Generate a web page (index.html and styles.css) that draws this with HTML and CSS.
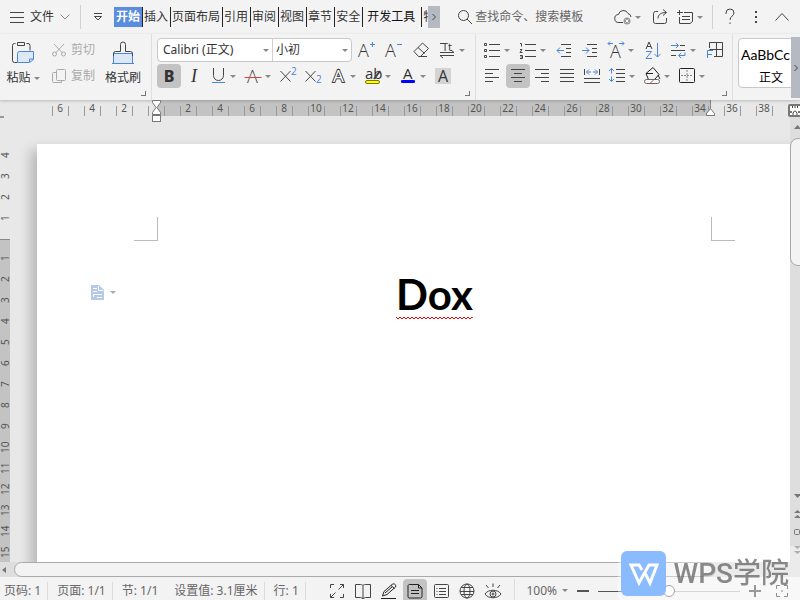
FILE: index.html
```html
<!DOCTYPE html>
<html lang="zh-CN">
  <head>
    <meta charset="UTF-8" />
    <meta name="viewport" content="width=device-width, initial-scale=1.0" />
    <title>Dox</title>
    <link rel="stylesheet" href="styles.css">
  </head>
  <body>
    <!-- Menu bar -->
    <header class="menubar">
      <button class="file-btn">
        <svg width="14" height="12" viewBox="0 0 14 12"><path d="M0 1.5h14M0 6.5h14M0 11.5h14" /></svg>
        文件
        <svg width="10" height="8" viewBox="0 0 10 8" class="soft"><path d="M.5 1.5L5 6l4.500-4.500" /></svg>
      </button>
      <span class="sep"></span>
      <button class="quick-btn" aria-label="自定义">
        <svg width="8" height="8" viewBox="0 0 8 8"><path d="M0 .5h8M.5 3.500L4 7l3.500-3.500z" /></svg>
      </button>
      <nav class="tabs">
        <button class="tab active">开始</button>
        <button class="tab">插入</button>
        <button class="tab">页面布局</button>
        <button class="tab">引用</button>
        <button class="tab">审阅</button>
        <button class="tab">视图</button>
        <button class="tab">章节</button>
        <button class="tab">安全</button>
        <button class="tab dev">开发工具</button>
        <button class="tab cut">特</button>
      </nav>
      <button class="tab-scroll" aria-label="更多选项卡">
        <svg width="4" height="8" viewBox="0 0 4 8"><path d="M.5 1L3.500 4L.5 7" /></svg>
      </button>
      <label class="search">
        <svg width="14" height="14" viewBox="0 0 14 14"><circle cx="5.500" cy="5.500" r="5" /><path d="M9 9l5 5" /></svg>
        <input type="text" placeholder="查找命令、搜索模板">
      </label>
      <div class="window-tools">
        <button class="drop" aria-label="云同步">
          <svg class="icon" viewBox="0 0 20 20"><path d="M10 15.500H6a4 4 0 0 1-.5-8A5 5 0 0 1 15 6.500a4 4 0 0 1 3 3.500" /><circle cx="14" cy="14" r="3.500" class="grey" /><path d="M12.500 12.500l3 3m0-3l-3 3" class="white" /></svg>
        </button>
        <button class="tool" aria-label="分享">
          <svg class="icon" viewBox="0 0 20 20"><path d="M8 4.500H5.500a2 2 0 0 0-2 2v8a2 2 0 0 0 2 2h9a2 2 0 0 0 2-2V11M8 11.500c0-4 3-6 8-6M13 2.500l3.500 3-3.500 3" /></svg>
        </button>
        <button class="drop" aria-label="批注">
          <svg class="icon" viewBox="0 0 20 20"><path d="M2 5.500h6M4.500 3v5M9 5.500h8.500v9l-2.500 2H4.500V10M7 9.500h8M7 12.500h8" /></svg>
        </button>
        <span class="sep"></span>
        <button class="tool" aria-label="帮助">
          <svg class="icon" viewBox="0 0 20 20"><path d="M6 7V6a4 4 0 0 1 8 0c0 3-4 3-4 7M10 15.500v1.500" /></svg>
        </button>
        <button class="tool" aria-label="更多">
          <svg class="icon" viewBox="0 0 20 20"><path d="M10 4v2M10 9v2M10 14v2" stroke-width="2" /></svg>
        </button>
        <button class="tool" aria-label="收起功能区">
          <svg class="icon" viewBox="0 0 20 20"><path d="M3.500 13.500l6.500-7 6.500 7" /></svg>
        </button>
      </div>
    </header>

    <!-- Ribbon -->
    <section class="ribbon">
      <div class="group">
        <div class="clipboard">
          <button class="big-btn">
            <svg width="28" height="26" viewBox="0 0 28 26"><path d="M6.500 4.500h-1a2 2 0 0 0-2 2v15a2 2 0 0 0 2 2h3M17.500 4.500h1.500a2 2 0 0 1 2 2v5M8.500 3.500h7v3h-7z" /><path d="M8.500 14.500a2 2 0 0 1 2-2h14v8l-4 3h-12z" class="paste" /><path d="M20.500 23v-3h4" class="blue" /></svg>
            <span class="with-caret">粘贴</span>
          </button>
          <div class="small-btns">
            <button class="small-btn" disabled>
              <svg width="16" height="16" viewBox="0 0 16 16"><path d="M3 2l8.500 9M13 2L4.500 11" /><circle cx="3.500" cy="12" r="2" /><circle cx="12.500" cy="12" r="2" /></svg>
              剪切
            </button>
            <button class="small-btn" disabled>
              <svg width="16" height="16" viewBox="0 0 16 16"><rect x="5.500" y="1.500" width="9" height="11" rx="1" /><path d="M5.500 4.500h-3a1 1 0 0 0-1 1v8a1 1 0 0 0 1 1h8v-2" /></svg>
              复制
            </button>
          </div>
          <button class="big-btn">
            <svg width="28" height="26" viewBox="0 0 28 26"><path d="M4.500 14.500h19v10h-19z" class="paste" /><path d="M4.500 17v-2.500a2 2 0 0 1 2-2h5v-7a2 2 0 0 1 5 0v7h5a2 2 0 0 1 2 2V17" /><path d="M3 24.500h22" class="blue" /></svg>
            格式刷
          </button>
        </div>
        <button class="launcher" aria-label="剪贴板"></button>
      </div>

      <div class="group">
        <div class="row font-row">
          <div class="combos">
            <label class="combo family">
              <select aria-label="字体"><option>Calibri (正文)</option></select>
            </label>
            <label class="combo size">
              <select aria-label="字号"><option>小初</option></select>
            </label>
          </div>
          <button class="tool" aria-label="增大字号">
            <svg class="icon" viewBox="0 0 20 20"><text x="1" y="17" class="thin">A</text><path d="M13 4.500h5M15.500 2v5" class="blue" /></svg>
          </button>
          <button class="tool" aria-label="减小字号">
            <svg class="icon" viewBox="0 0 20 20"><text x="1" y="17" class="thin">A</text><path d="M13 4.500h5" class="blue" /></svg>
          </button>
          <button class="tool" aria-label="清除格式">
            <svg class="icon" viewBox="0 0 20 20"><path d="M3 11.500l8.500-8.500 6 5.500-8 8H7.500zM7 7.500l6.500 6M9 16.500h7" /></svg>
          </button>
          <button class="drop" aria-label="更改大小写">
            <svg class="icon" viewBox="0 0 20 20"><text x="5" y="11" class="tiny">Tt</text><path d="M3 3.500h4M3 12.500h14M3 15.500h14M14 10l3 2.500M6 18l-3-2.500" /></svg>
          </button>
        </div>
        <div class="row">
          <button class="tool active bold" aria-label="加粗">B</button>
          <button class="tool italic" aria-label="倾斜">I</button>
          <button class="drop" aria-label="下划线">
            <svg class="icon" viewBox="0 0 20 20"><path d="M5.500 2v7.500a4.500 4.500 0 0 0 10 0V2" /><path d="M4 16.500h13" class="blue" /></svg>
          </button>
          <button class="drop" aria-label="删除线">
            <svg class="icon" viewBox="0 0 20 20"><text x="4" y="17" class="thin">A</text><path d="M1.500 11.500h17" class="red" /></svg>
          </button>
          <button class="tool" aria-label="上标">
            <svg class="icon" viewBox="0 0 20 20"><path d="M1.500 5l10 10.500M11.500 5l-10 10.500" /><text x="12" y="9" class="script">2</text></svg>
          </button>
          <button class="tool" aria-label="下标">
            <svg class="icon" viewBox="0 0 20 20"><path d="M1.500 5l10 10.500M11.500 5l-10 10.500" /><text x="12" y="17" class="script">2</text></svg>
          </button>
          <button class="drop" aria-label="文字效果">
            <svg class="icon" viewBox="0 0 20 20"><text x="5" y="16" class="outline">A</text></svg>
          </button>
          <button class="drop" aria-label="突出显示">
            <svg class="icon" viewBox="0 0 20 20"><text x="2" y="13" class="ab">ab</text><path d="M17 5l-6 8" stroke-width="2" /><rect x="2.500" y="14.500" width="14" height="3" rx="1.500" fill="#ffff00" stroke="#777700" /></svg>
          </button>
          <button class="drop" aria-label="字体颜色">
            <svg class="icon" viewBox="0 0 20 20"><text x="5" y="13" class="ab">A</text><rect x="3" y="14" width="14" height="3" rx="1" fill="#0000ff" stroke="none" /></svg>
          </button>
          <button class="tool" aria-label="字符底纹">
            <svg class="icon" viewBox="0 0 20 20"><rect x="1" y="2" width="16" height="16" fill="#d4d4d4" stroke="none" /><text x="4" y="16" class="mid">A</text></svg>
          </button>
        </div>
        <button class="launcher" aria-label="字体设置"></button>
      </div>

      <div class="group">
        <div class="row para-row">
          <button class="drop" aria-label="项目符号">
            <svg class="icon" viewBox="0 0 20 20"><path d="M7 4.500h11M7 10.500h11M7 16.500h11" /><path d="M2.500 3.500h2v2h-2zM2.500 9.500h2v2h-2zM2.500 15.500h2v2h-2z" /></svg>
          </button>
          <button class="drop" aria-label="编号">
            <svg class="icon" viewBox="0 0 20 20"><path d="M7 4.500h11M7 10.500h11M7 16.500h11" /><path d="M2 3.500h1.500v3M2 9.500h2l-2 3h2.500M2 15.500h2.500v3H2M2.500 17h2" /></svg>
          </button>
          <button class="tool" aria-label="减少缩进">
            <svg class="icon" viewBox="0 0 20 20"><path d="M6 4.500h10M11 8.500h5M11 12.500h5M6 16.500h10" /><path d="M9 10.500H2M5 7.500l-3 3 3 3" class="blue" /></svg>
          </button>
          <button class="tool" aria-label="增加缩进">
            <svg class="icon" viewBox="0 0 20 20"><path d="M6 4.500h10M11 8.500h5M11 12.500h5M6 16.500h10" /><path d="M1 10.500h7M5 7.500l3 3-3 3" class="blue" /></svg>
          </button>
          <button class="drop" aria-label="中文版式">
            <svg class="icon" viewBox="0 0 20 20"><text x="4" y="18" class="thin">A</text><path d="M7 3.500H2M4 1.500l-2 2 2 2M13 3.500h5M16 1.500l2 2-2 2" class="blue" /></svg>
          </button>
          <button class="tool" aria-label="排序">
            <svg class="icon" viewBox="0 0 20 20"><path d="M3 9l3-7 3 7M4 6.500h4" /><path d="M3 11.500h5.500l-5.500 7h6M14.500 3v14M11.500 14l3 3 3-3" class="blue" /></svg>
          </button>
          <button class="drop" aria-label="制表位">
            <svg class="icon" viewBox="0 0 20 20"><path d="M12 5.500h5M3 10.500h14M3 15.500h5" /><path d="M3 5.500h7M8 3l2.500 2.500L8 8M17 12.500v3h-6M13 13l-2.500 2.500L13 18" class="blue" /></svg>
          </button>
          <button class="tool" aria-label="表格线">
            <svg class="icon" viewBox="0 0 20 20"><path d="M4.500 8V2.500h13v14H9M11.500 2.500v14M4.500 9.500h13" /><path d="M2.500 18v-7.500H8M2.500 14.500H7" class="blue" /></svg>
          </button>
        </div>
        <div class="row">
          <button class="tool" aria-label="左对齐">
            <svg class="icon" viewBox="0 0 20 20"><path d="M2 3.500h14M2 7.500h8M2 11.500h14M2 15.500h8" /></svg>
          </button>
          <button class="tool active" aria-label="居中对齐">
            <svg class="icon" viewBox="0 0 20 20"><path d="M3 3.500h14M6 7.500h8M3 11.500h14M6 15.500h8" /></svg>
          </button>
          <button class="tool" aria-label="右对齐">
            <svg class="icon" viewBox="0 0 20 20"><path d="M2 3.500h14M8 7.500h8M2 11.500h14M8 15.500h8" /></svg>
          </button>
          <button class="tool" aria-label="两端对齐">
            <svg class="icon" viewBox="0 0 20 20"><path d="M2 3.500h14M2 7.500h14M2 11.500h14M2 15.500h14" /></svg>
          </button>
          <button class="tool" aria-label="分散对齐">
            <svg class="icon" viewBox="0 0 20 20"><path d="M1.500 3v6M16.500 3v6M1 12.500h16M1 16.500h16" /><path d="M3.500 6h4.500M10 6h4.500M6 3.500L3.500 6 6 8.500M12 3.500L14.500 6 12 8.500" class="blue" /></svg>
          </button>
          <button class="drop" aria-label="行距">
            <svg class="icon" viewBox="0 0 20 20"><path d="M9 3.500h9M9 7.500h9M9 11.500h9M9 15.500h9" /><path d="M4.500 2.500v5M4.500 10.500v5M2 5l2.500-2.500L7 5M2 13l2.500 2.500L7 13" class="blue" /></svg>
          </button>
          <button class="drop" aria-label="底纹颜色">
            <svg class="icon" viewBox="0 0 20 20"><path d="M4 7.500l7-6 6 7-4.500 5H6.500zM4 7.500h7M16 9l2 4" stroke="#222" /><rect x="2.500" y="13.500" width="15" height="4" rx="2" fill="#fff" stroke="#666" /><path d="M8 17.500l4-4" class="red" /></svg>
          </button>
          <button class="drop" aria-label="边框">
            <svg class="icon" viewBox="0 0 20 20"><rect x="2.500" y="2.500" width="15" height="14" rx="1" stroke="#222" /><path d="M10 4v12M4 9.500h12" stroke-dasharray="2 1" class="soft" /></svg>
          </button>
        </div>
        <button class="launcher" aria-label="段落设置"></button>
      </div>

      <div class="gallery">
        <button class="style-card"><span class="sample">AaBbCc</span><span>正文</span></button>
      </div>
      <button class="ribbon-scroll" aria-label="向右滚动">
        <svg width="4" height="8" viewBox="0 0 4 8"><path d="M.5 1L3.500 4L.5 7" /></svg>
      </button>
    </section>

    <!-- Horizontal ruler -->
    <div class="ruler">
      <div class="ruler-body"></div>
      <div class="ruler-marks">
        <span>6</span><span>4</span><span>2</span><span></span>
        <span>2</span><span>4</span><span>6</span><span>8</span>
        <span>10</span><span>12</span><span>14</span><span>16</span>
        <span>18</span><span>20</span><span>22</span><span>24</span>
        <span>26</span><span>28</span><span>30</span><span>32</span>
        <span>34</span><span>36</span><span>38</span><span></span>
      </div>
      <svg class="indent-left" width="11" height="22" viewBox="0 0 11 22"><path d="M1.500.5h8v2L6 7.500l3.500 5v2h-8v-2L5 7.500l-3.500-5z" /><rect x="1.500" y="15.500" width="8" height="6" /></svg>
      <svg class="indent-right" width="11" height="8" viewBox="0 0 11 8"><path d="M1.500 7.500v-2L5.500.5l4 5v2z" /></svg>
      <button class="ruler-toggle" aria-label="标尺">
        <svg width="10" height="9" viewBox="0 0 10 9"><path d="M0 0h10v5H8v2h2v2H0V7h2V5H0z" fill="#fff" stroke="none" /><path d="M2.500 0v2M5 0v2M7.500 0v2M3 9V7l1.500-2h1L7 7v2" /></svg>
      </button>
    </div>

    <main class="workspace">
      <div class="vruler">
        <div class="vruler-margin"><span>4</span><span>3</span><span>2</span><span>1</span></div>
        <div class="vruler-body">
          <span>1</span><span>2</span><span>3</span><span>4</span><span>5</span>
          <span>6</span><span>7</span><span>8</span><span>9</span><span>10</span>
          <span>11</span><span>12</span><span>13</span><span>14</span><span>15</span>
        </div>
      </div>

      <div class="canvas">
        <article class="page">
          <span class="crop crop-left"></span>
          <span></span>
          <span class="crop crop-right"></span>
          <button class="para-handle" aria-label="段落布局">
            <svg width="13" height="15" viewBox="0 0 13 15"><path d="M0 0h8l5 5v10H0z" fill="#b4cae8" stroke="none" /><path d="M7.500 1v4.500H12M2 3.500h4M2 6.500h4M2 9.500h9M2.500 12v-2.500M6 12.500h5" class="white" /></svg>
          </button>
          <h1 contenteditable="true" spellcheck="false">Dox<svg class="squiggle" height="4"><defs><pattern id="wave" width="4" height="4" patternUnits="userSpaceOnUse"><path d="M-1 0l3 3 3-3" /></pattern></defs><rect width="100%" height="4" fill="url(#wave)" stroke="none" /></svg></h1>
        </article>
      </div>

      <div class="vscroll">
        <button class="v-up" aria-label="向上滚动"><svg width="7" height="4" viewBox="0 0 7 4"><path d="M0 4l3.500-4L7 4z" /></svg></button>
        <div class="vthumb"></div>
        <div class="v-buttons">
          <button aria-label="向下滚动"><svg width="7" height="8" viewBox="0 0 7 8"><path d="M0 2h7L3.500 6z" /></svg></button>
          <button aria-label="上一页"><svg width="7" height="8" viewBox="0 0 7 8"><path d="M0 3l3.500-3L7 3zM0 8l3.500-3L7 8z" /></svg></button>
          <button aria-label="选择浏览对象"><svg width="7" height="8" viewBox="0 0 7 8"><rect x=".5" y="1.500" width="5" height="5" rx="1" class="box" /></svg></button>
          <button aria-label="下一页"><svg width="7" height="8" viewBox="0 0 7 8"><path d="M0 0h7L3.500 3zM0 5h7L3.500 8z" /></svg></button>
        </div>
      </div>
    </main>

    <div class="hscroll">
      <button aria-label="向左滚动"><svg width="4" height="6" viewBox="0 0 4 6"><path d="M4 0v6L0 3z" /></svg></button>
      <div class="hthumb"></div>
    </div>

    <!-- Status bar -->
    <footer class="statusbar">
      <span class="stat">页码: 1</span>
      <span class="stat">页面: 1/1</span>
      <span class="stat">节: 1/1<span>设置值: 3.1厘米</span></span>
      <span class="stat">行: 1</span>
      <div class="views">
        <button class="tool" aria-label="全屏显示"><svg class="icon" viewBox="0 0 20 20"><path d="M3.500 7V3.500H7M13 3.500h3.500V7M16.500 13v3.500H13M7 16.500H3.500V13M11.500 8.500l5-5M8.500 11.500l-5 5" /></svg></button>
        <button class="tool" aria-label="阅读版式"><svg class="icon" viewBox="0 0 20 20"><path d="M10 4.500v13M10 4.500c-1-1-2-1-3-1H2.500v13h5l2.500 1 2.500-1h5v-13H13c-1 0-2 0-3 1" /></svg></button>
        <button class="tool" aria-label="写作模式"><svg class="icon" viewBox="0 0 20 20"><path d="M3.500 15l1.500-4.500L13 3.500c2-1.500 4.500 0 3.500 2.500L8 13.500zM12 4.500l3.500 3M6 12l7-6M2 17.500h15" stroke="#222" /></svg></button>
        <button class="tool active" aria-label="页面视图"><svg class="icon" viewBox="0 0 20 20"><path d="M5 3.500h8.500l3.500 3.500v8.500a1.500 1.500 0 0 1-1.500 1.500h-11A1.500 1.500 0 0 1 3 15.500V5a1.500 1.500 0 0 1 2-1.500zM13.500 3.500V7H17M6 9.500h8M6 12.500h8" stroke="#222" /></svg></button>
        <button class="tool" aria-label="大纲"><svg class="icon" viewBox="0 0 20 20"><rect x="3.500" y="3.500" width="14" height="13" rx="1" /><path d="M8 7.500h7M8 10.500h7M8 13.500h7M5.500 7.500h1M5.500 10.500h1M5.500 13.500h1" /></svg></button>
        <button class="tool" aria-label="Web 版式"><svg class="icon" viewBox="0 0 20 20"><circle cx="10" cy="10" r="7" /><ellipse cx="10" cy="10" rx="3" ry="7" /><path d="M4 6.500h12M3 10.500h14M4 13.500h12" /></svg></button>
        <button class="tool" aria-label="护眼模式"><svg class="icon" viewBox="0 0 20 20"><path d="M2 13c3-5 13-5 16 0-3 5-13 5-16 0zM10 6V2.500M5.500 7L3 4M14.500 7L17 4" /><circle cx="10" cy="13" r="3" /><circle cx="10" cy="13" r="1" /></svg></button>
      </div>
      <div class="zoom">
        <button class="zoom-value with-caret">100%</button>
        <button class="zoom-step" aria-label="缩小"><svg width="12" height="12" viewBox="0 0 12 12"><path d="M0 6h12" /></svg></button>
        <input type="range" min="0" max="100" value="50" aria-label="显示比例">
        <button class="zoom-step" aria-label="放大"><svg width="12" height="12" viewBox="0 0 12 12"><path d="M0 6h12M6 0v12" /></svg></button>
        <button class="tool" aria-label="最佳显示比例"><svg class="icon" viewBox="0 0 20 20"><path d="M4.500 8V4.500H8M12 4.500h3.500V8M15.500 12v3.500H12M8 15.500H4.500V12M10 9v2" /></svg></button>
      </div>
    </footer>

    <div class="brand">
      <svg width="46" height="46" viewBox="0 0 46 46"><rect width="45" height="45" y="1" rx="6" fill="#8abbff" stroke="none" /><path d="M21 20l-3-5h-8l8 18 10-18h8L29 33l-5-10" stroke="#fff" stroke-width="3" /></svg>
      WPS学院
    </div>
  </body>
</html>
```

FILE: styles.css
```css
* {
  margin: 0;
  padding: 0;
  box-sizing: border-box;
}

body {
  height: 100vh;
  display: flex;
  flex-direction: column;
  overflow: hidden;
  background: #f3f3f3;
  color: #333;
  font-family: "Noto Sans", "Noto Sans CJK SC", sans-serif;
  font-size: 12px;
  line-height: 18px;
}

button,
input,
select {
  font: inherit;
  color: inherit;
  background: none;
  border: none;
  outline: none;
}

button {
  display: flex;
  align-items: center;
  justify-content: center;
  flex-shrink: 0;
  white-space: nowrap;
}

svg {
  flex-shrink: 0;
  fill: none;
  stroke: #444;
}

.icon {
  width: 20px;
  height: 20px;
  overflow: visible;
}

svg text {
  fill: #333;
  stroke: none;
  font-family: "Open Sans", sans-serif;
}

svg .blue { stroke: #4a86dc; }
svg .red { stroke: #e23b3b; }
svg .white { stroke: #fff; }
svg .grey { fill: #999; stroke: none; }
svg .paste { fill: #dce8f5; stroke: #4a86dc; }
.soft { stroke: #888; }

svg .thin { font-size: 18px; font-weight: 300; }
svg .mid { font-size: 16px; }
svg .ab { font-size: 15px; }
svg .tiny { font-size: 11px; }
svg .script { font-size: 10px; fill: #4a86dc; }

/* hollow letter: dark rim painted behind a white face */
svg .outline {
  font-size: 17px;
  fill: #fff;
  stroke: #444;
  stroke-width: 2px;
  paint-order: stroke;
}

.sep {
  width: 1px;
  height: 24px;
  background: #d0d0d0;
}

/* buttons shared by all bars */
.tool {
  width: 24px;
  height: 24px;
  border-radius: 4px;
}

.tool.active {
  background: #c3c3c3;
}

.drop {
  width: 34px;
  height: 24px;
  justify-content: flex-start;
  gap: 2px;
  padding-left: 1px;
}

.drop::after,
.with-caret::after,
.combo::after {
  content: "";
  flex-shrink: 0;
  border: 3px solid transparent;
  border-top-color: #888;
  border-bottom: none;
}

.with-caret {
  display: flex;
  align-items: center;
  gap: 3px;
}

/* menu bar */
.menubar {
  display: flex;
  align-items: center;
  flex-shrink: 0;
  height: 34px;
  padding-right: 6px;
}

.file-btn {
  gap: 6px;
  padding: 0 10px;
}

.quick-btn {
  width: 33px;
}

.tabs {
  display: flex;
  min-width: 0;
  overflow: hidden;
}

.tab {
  height: 20px;
  padding: 0 2px 0 1px;
  border-right: 1px solid #222;
}

.tab.active {
  background: #5a8de0;
  color: #fff;
  font-weight: bold;
  padding-left: 2px;
}

.tab.dev {
  padding: 0 6px 0 4px;
  color: #111;
}

.tab.cut {
  width: 6px;
  justify-content: flex-start;
  overflow: hidden;
  border: none;
}

.tab-scroll {
  width: 12px;
  height: 22px;
  background: #b4b9c2;
}

.search {
  display: flex;
  align-items: center;
  flex: 1;
  min-width: 0;
  gap: 3px;
  padding-left: 18px;
}

.search input {
  flex: 1;
  min-width: 0;
}

.search input::placeholder {
  color: #666;
}

.window-tools {
  display: flex;
  align-items: center;
  gap: 2px;
}

.window-tools .sep {
  margin: 0 3px 0 2px;
}

/* ribbon */
.ribbon {
  position: relative;
  z-index: 1;
  display: flex;
  flex-shrink: 0;
  height: 66px;
  background: #f3f3f3;
  box-shadow: 0 1px 3px rgba(0, 0, 0, 0.2);
}

.group {
  display: flex;
  flex-direction: column;
  gap: 2px;
  padding: 4px 5px 0;
  border-right: 1px solid #dedede;
}

.row {
  display: flex;
  gap: 1px;
}

.font-row {
  gap: 3px;
}

.para-row {
  gap: 2px;
}

.launcher {
  align-self: flex-end;
  width: 5px;
  height: 5px;
  margin-top: 1px;
  border-right: 1px solid #777;
  border-bottom: 1px solid #777;
}

.clipboard {
  display: flex;
  gap: 10px;
  height: 50px;
  padding-right: 5px;
}

.big-btn {
  flex-direction: column;
  width: 36px;
  gap: 4px;
}

.small-btns {
  display: flex;
  flex-direction: column;
  gap: 2px;
}

.small-btn {
  height: 24px;
  gap: 4px;
  color: #aaa;
}

.small-btn svg {
  stroke: #aaa;
}

.combos {
  display: flex;
  width: 195px;
  height: 24px;
  background: #fff;
  border: 1px solid #c8c8c8;
  border-radius: 4px;
}

.combo {
  display: flex;
  align-items: center;
  padding: 0 3px 0 5px;
}

.combo.family {
  flex: 1;
  border-right: 1px solid #d0d0d0;
}

.combo.size {
  width: 78px;
  padding-left: 3px;
}

.combo select {
  flex: 1;
  min-width: 0;
  appearance: none;
}

.bold {
  font-size: 16px;
  font-weight: 800;
}

.italic {
  font-family: "Liberation Serif", serif;
  font-size: 18px;
  font-style: italic;
}

.gallery {
  flex: 1;
  min-width: 0;
  padding: 4px 0 0 5px;
  overflow: hidden;
}

.style-card {
  flex-direction: column;
  width: 66px;
  height: 50px;
  gap: 5px;
  padding-top: 7px;
  background: #fff;
  border: 1px solid #c8c8c8;
  border-radius: 4px;
  color: #000;
}

.sample {
  align-self: flex-start;
  padding-left: 2px;
  font-family: Lato, sans-serif;
  font-size: 14px;
}

.ribbon-scroll {
  width: 9px;
  height: 61px;
  margin-top: 3px;
  background: #b4b9c2;
}

/* rulers */
.ruler {
  position: relative;
  flex-shrink: 0;
  height: 16px;
  background: #e8e8e8;
}

.ruler-body {
  position: absolute;
  left: 156px;
  width: 555px;
  height: 16px;
  background: #c3c3c3;
  border-right: 1px solid #888;
}

.ruler-marks {
  position: relative;
  display: flex;
  height: 16px;
  margin-left: 44px;
  overflow: hidden;
  font-size: 10px;
  line-height: 16px;
  color: #555;
}

.ruler-marks span {
  flex: 0 0 32px;
  text-align: center;
  background: linear-gradient(#999, #999) 8px 6px / 1px 10px no-repeat,
    linear-gradient(#999, #999) 24px 6px / 1px 10px no-repeat;
}

.indent-left,
.indent-right {
  position: absolute;
  z-index: 1;
  fill: #fff;
  stroke: #777;
}

.indent-left {
  left: 151px;
  top: 0;
}

.indent-right {
  left: 705px;
  top: 8px;
}

.ruler-toggle {
  position: absolute;
  right: -2px;
  top: 4px;
  width: 14px;
  height: 13px;
  background: #777;
  border-radius: 2px;
}

.workspace {
  display: flex;
  flex: 1;
  min-height: 0;
  background: #e8e8e8;
}

.vruler {
  display: flex;
  flex-direction: column;
  width: 10px;
  overflow: hidden;
  color: #555;
  font-size: 10px;
  line-height: 10px;
}

.vruler span {
  display: block;
  flex-shrink: 0;
  width: 10px;
  height: 21px;
  padding-left: 3px;
  text-align: center;
  writing-mode: vertical-rl;
  transform: rotate(180deg);
}

.vruler-margin {
  padding: 29px 0 10px;
  background: linear-gradient(#999, #999) 0 0 / 4px 2px no-repeat;
}

.vruler-body {
  flex: 1;
  min-height: 0;
  padding-top: 8px;
  overflow: hidden;
  background: #c3c3c3;
  border-top: 1px solid #888;
}

/* document */
.canvas {
  flex: 1;
  min-width: 0;
  padding: 28px 0 0 27px;
  overflow: hidden;
}

.page {
  display: grid;
  grid-template-columns: 121px 1fr 120px;
  grid-template-rows: 97px auto;
  width: 794px;
  min-height: 1123px;
  align-content: start;
  background: #fff;
  box-shadow: -6px 6px 12px rgba(0, 0, 0, 0.22);
}

.crop {
  align-self: end;
  width: 24px;
  height: 24px;
  border-bottom: 1px solid #bbb;
}

.crop-left {
  justify-self: end;
  border-right: 1px solid #bbb;
}

.crop-right {
  border-left: 1px solid #bbb;
}

.para-handle {
  align-self: start;
  justify-self: end;
  gap: 6px;
  margin: 44px 42px 0 0;
}

.para-handle::after {
  content: "";
  border: 3px solid transparent;
  border-top-color: #aaa;
  border-bottom: none;
}

h1 {
  justify-self: center;
  margin-top: 31px;
  padding: 0 1px;
  color: #000;
  font-family: Lato, sans-serif;
  font-size: 42px;
  font-weight: bold;
  line-height: 44px;
  outline: none;
}

.squiggle {
  display: block;
  width: 0;
  min-width: 100%;
  stroke: #e00000;
}

/* scroll bars */
.vscroll {
  display: flex;
  flex-direction: column;
  width: 10px;
  padding-top: 2px;
  background: #dedede;
  overflow: hidden;
}

.vscroll svg,
.hscroll svg {
  fill: #777;
  stroke: none;
}

.vscroll button {
  width: 14px;
  height: 18px;
}

.vscroll .box {
  fill: none;
  stroke: #777;
}

.vthumb {
  width: 18px;
  height: 128px;
  margin-top: 2px;
  background: #f3f3f3;
  border: 1px solid #a9a9a9;
  border-radius: 8px;
}

.v-buttons {
  margin-top: auto;
  padding-bottom: 3px;
}

.hscroll {
  display: flex;
  flex-shrink: 0;
  height: 15px;
  background: #dedede;
}

.hscroll button {
  width: 14px;
  padding-right: 6px;
}

.hthumb {
  flex: 1;
  margin-right: 84px;
  background: #f3f3f3;
  border: 1px solid #a9a9a9;
  border-radius: 8px;
}

/* status bar */
.statusbar {
  display: flex;
  align-items: center;
  flex-shrink: 0;
  height: 23px;
  padding-top: 4px;
  color: #666;
}

.stat {
  display: flex;
  gap: 16px;
  padding: 0 6px 0 9px;
  border-right: 1px solid #dcdcdc;
  white-space: nowrap;
}

.stat:first-child {
  padding-left: 4px;
}

.views {
  display: flex;
  gap: 2px;
  margin-left: auto;
  padding-right: 9px;
  border-right: 1px solid #dcdcdc;
}

.zoom {
  display: flex;
  align-items: center;
  padding: 0 6px 0 11px;
}

.zoom-value {
  gap: 5px;
}

.zoom-step {
  width: 30px;
}

.zoom-step svg {
  stroke: #555;
  stroke-width: 2;
}

.zoom input {
  width: 142px;
  height: 14px;
  appearance: none;
  background: linear-gradient(#555, #555) 0 7px / 50% 1px no-repeat,
    linear-gradient(#bbb, #bbb) 100% 7px / 50% 1px no-repeat;
}

.zoom input::-webkit-slider-thumb {
  appearance: none;
  width: 12px;
  height: 12px;
  background: #fff;
  border: 1px solid #666;
  border-radius: 50%;
}

/* brand mark over the lower right corner */
.brand {
  position: fixed;
  right: 0;
  bottom: 0;
  z-index: 2;
  display: flex;
  align-items: center;
  gap: 7px;
  padding: 4px 11px 4px 3px;
  background: rgba(255, 255, 255, 0.4);
  color: rgba(90, 90, 90, 0.7);
  font-family: Roboto, "Noto Sans CJK SC", sans-serif;
  font-size: 28px;
  font-weight: 500;
  line-height: 45px;
  pointer-events: none;
}
```
